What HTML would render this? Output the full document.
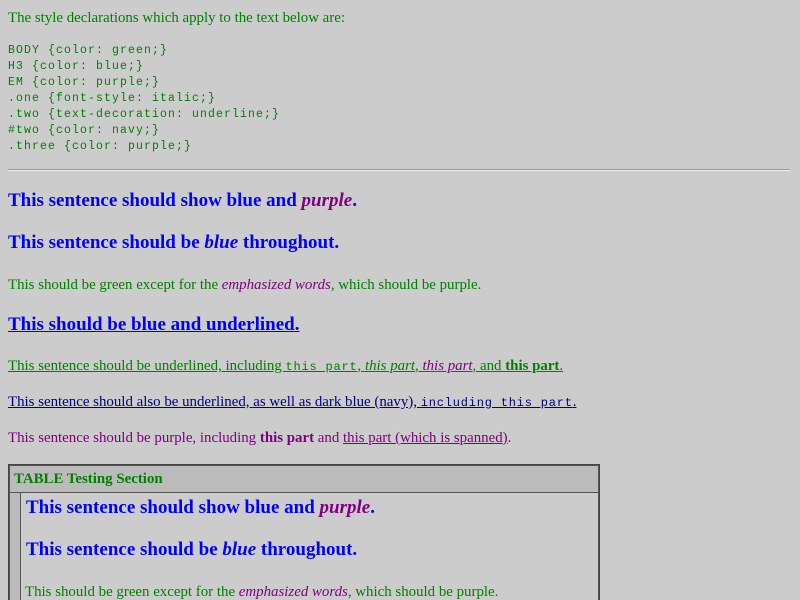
<html style="height:600px"><head><style>
html,body{margin:0;overflow:hidden;height:600px}
body{background:#ccc;font-family:"Liberation Serif",serif;color:green;font-size:14.9px}
#w{position:relative;width:800px;height:600px;overflow:hidden}
.a{position:absolute;left:8px;white-space:nowrap;line-height:20px}
pre{position:absolute;left:8px;top:43px;margin:0;font-family:"Liberation Mono",monospace;font-size:11.5px;letter-spacing:1.1px;line-height:16px;color:green}
h3{font-size:19px;color:blue;font-weight:bold;margin:0}
em{color:purple}
.u{text-decoration:underline}
tt{font-family:"Liberation Mono",monospace;font-size:12px;letter-spacing:0.8px}
</style></head><body><div id="w">
<div class="a" style="top:8px">The style declarations which apply to the text below are:</div>
<pre>BODY {color: green;}
H3 {color: blue;}
EM {color: purple;}
.one {font-style: italic;}
.two {text-decoration: underline;}
#two {color: navy;}
.three {color: purple;}</pre>
<div style="position:absolute;left:8px;top:169px;width:782px;height:0;border-top:1px solid #999;border-bottom:1px solid #eee"></div>
<h3 class="a" style="top:191px">This sentence should show blue and <em>purple</em>.</h3>
<h3 class="a" style="top:233px">This sentence should be <i>blue</i> throughout.</h3>
<div class="a" style="top:275px">This should be green except for the <em>emphasized words</em>, which should be purple.</div>
<h3 class="a u" style="top:315px">This should be blue and underlined.</h3>
<div class="a u" style="top:356px">This sentence should be underlined, including <tt>this part</tt>, <i>this part</i>, <em>this part</em>, and <b>this part</b>.</div>
<div class="a u" style="top:392px;color:navy">This sentence should also be underlined, as well as dark blue (navy), <tt>including this part</tt>.</div>
<div class="a" style="top:428px;color:purple">This sentence should be purple, including <b>this part</b> and <span class="u">this part (which is spanned)</span>.</div>
<div style="position:absolute;left:8px;top:464px;width:592px;height:160px;border:1px solid #444;box-sizing:border-box"></div>
<div style="position:absolute;left:9px;top:465px;width:590px;height:28px;border:1px solid #555;background:#bbb;box-sizing:border-box"></div>
<div class="a" style="top:469px;left:14px;font-weight:bold">TABLE Testing Section</div>
<div style="position:absolute;left:9px;top:492px;width:12px;height:140px;border:1px solid #555;background:#bbb;box-sizing:border-box"></div>
<div style="position:absolute;left:20px;top:492px;width:579px;height:140px;border:1px solid #555;box-sizing:border-box"></div>
<h3 class="a" style="top:498px;left:26px">This sentence should show blue and <em>purple</em>.</h3>
<h3 class="a" style="top:540px;left:26px">This sentence should be <i>blue</i> throughout.</h3>
<div class="a" style="top:582px;left:25px">This should be green except for the <em>emphasized words</em>, which should be purple.</div>
</div></body></html>
